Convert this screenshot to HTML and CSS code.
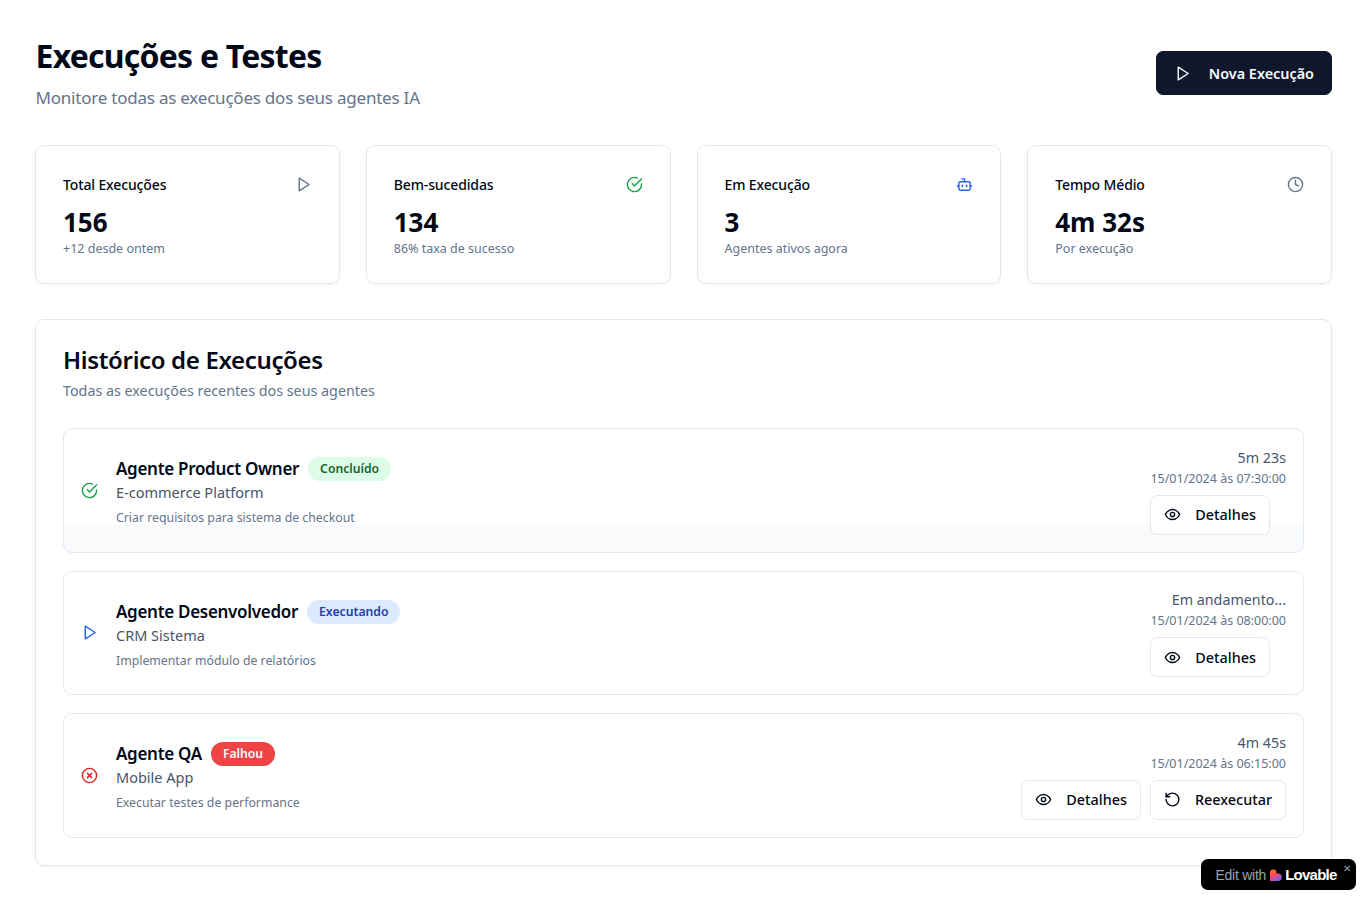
FILE: index.html
```html
<!DOCTYPE html>
<html lang="pt-BR">

<head>
    <meta charset="UTF-8">
    <title>Execuções e Testes</title>
    <link rel="stylesheet" href="styles.css">
</head>

<body>
    <main class="page">
        <header class="page-header">
            <div>
                <h1>Execuções e Testes</h1>
                <p class="page-sub">Monitore todas as execuções dos seus agentes IA</p>
            </div>
            <button class="btn btn-primary">
                <svg class="icon" viewBox="0 0 24 24"><polygon points="6 3 20 12 6 21 6 3"/></svg>
                Nova Execução
            </button>
        </header>

        <section class="stats">
            <div class="stat-card">
                <div class="stat-top">
                    <span class="stat-label">Total Execuções</span>
                    <svg class="icon slate" viewBox="0 0 24 24"><polygon points="6 3 20 12 6 21 6 3"/></svg>
                </div>
                <div class="stat-value">156</div>
                <div class="stat-note">+12 desde ontem</div>
            </div>
            <div class="stat-card">
                <div class="stat-top">
                    <span class="stat-label">Bem-sucedidas</span>
                    <svg class="icon green" viewBox="0 0 24 24"><path d="M22 11.08V12a10 10 0 1 1-5.93-9.14"/><path d="m9 11 3 3L22 4"/></svg>
                </div>
                <div class="stat-value">134</div>
                <div class="stat-note">86% taxa de sucesso</div>
            </div>
            <div class="stat-card">
                <div class="stat-top">
                    <span class="stat-label">Em Execução</span>
                    <svg class="icon blue" viewBox="0 0 24 24"><path d="M12 8V4H8"/><rect x="4" y="8" width="16" height="12" rx="2"/><path d="M2 14h2"/><path d="M20 14h2"/><path d="M15 13v2"/><path d="M9 13v2"/></svg>
                </div>
                <div class="stat-value">3</div>
                <div class="stat-note">Agentes ativos agora</div>
            </div>
            <div class="stat-card">
                <div class="stat-top">
                    <span class="stat-label">Tempo Médio</span>
                    <svg class="icon slate" viewBox="0 0 24 24"><circle cx="12" cy="12" r="10"/><polyline points="12 6 12 12 16 14"/></svg>
                </div>
                <div class="stat-value">4m 32s</div>
                <div class="stat-note">Por execução</div>
            </div>
        </section>

        <section class="history">
            <h2>Histórico de Execuções</h2>
            <p class="history-sub">Todas as execuções recentes dos seus agentes</p>

            <div class="run-list">
                <article class="run run-hover">
                    <svg class="icon green" viewBox="0 0 24 24"><path d="M22 11.08V12a10 10 0 1 1-5.93-9.14"/><path d="m9 11 3 3L22 4"/></svg>
                    <div class="run-info">
                        <div class="run-title">
                            <h3>Agente Product Owner</h3>
                            <span class="badge badge-done">Concluído</span>
                        </div>
                        <p class="run-project">E-commerce Platform</p>
                        <p class="run-task">Criar requisitos para sistema de checkout</p>
                    </div>
                    <div class="run-side">
                        <div class="run-time">5m 23s</div>
                        <div class="run-date">15/01/2024 às 07:30:00</div>
                        <div class="run-actions">
                            <button class="btn btn-outline btn-inset">
                                <svg class="icon" viewBox="0 0 24 24"><path d="M2 12s3-7 10-7 10 7 10 7-3 7-10 7-10-7-10-7Z"/><circle cx="12" cy="12" r="3"/></svg>
                                Detalhes
                            </button>
                        </div>
                    </div>
                </article>

                <article class="run">
                    <svg class="icon blue" viewBox="0 0 24 24"><polygon points="6 3 20 12 6 21 6 3"/></svg>
                    <div class="run-info">
                        <div class="run-title">
                            <h3>Agente Desenvolvedor</h3>
                            <span class="badge badge-running">Executando</span>
                        </div>
                        <p class="run-project">CRM Sistema</p>
                        <p class="run-task">Implementar módulo de relatórios</p>
                    </div>
                    <div class="run-side">
                        <div class="run-time">Em andamento...</div>
                        <div class="run-date">15/01/2024 às 08:00:00</div>
                        <div class="run-actions">
                            <button class="btn btn-outline btn-inset">
                                <svg class="icon" viewBox="0 0 24 24"><path d="M2 12s3-7 10-7 10 7 10 7-3 7-10 7-10-7-10-7Z"/><circle cx="12" cy="12" r="3"/></svg>
                                Detalhes
                            </button>
                        </div>
                    </div>
                </article>

                <article class="run">
                    <svg class="icon red" viewBox="0 0 24 24"><circle cx="12" cy="12" r="10"/><path d="m15 9-6 6"/><path d="m9 9 6 6"/></svg>
                    <div class="run-info">
                        <div class="run-title">
                            <h3>Agente QA</h3>
                            <span class="badge badge-failed">Falhou</span>
                        </div>
                        <p class="run-project">Mobile App</p>
                        <p class="run-task">Executar testes de performance</p>
                    </div>
                    <div class="run-side">
                        <div class="run-time">4m 45s</div>
                        <div class="run-date">15/01/2024 às 06:15:00</div>
                        <div class="run-actions">
                            <button class="btn btn-outline">
                                <svg class="icon" viewBox="0 0 24 24"><path d="M2 12s3-7 10-7 10 7 10 7-3 7-10 7-10-7-10-7Z"/><circle cx="12" cy="12" r="3"/></svg>
                                Detalhes
                            </button>
                            <button class="btn btn-outline">
                                <svg class="icon" viewBox="0 0 24 24"><path d="M3 12a9 9 0 1 0 9-9 9.75 9.75 0 0 0-6.74 2.74L3 8"/><path d="M3 3v5h5"/></svg>
                                Reexecutar
                            </button>
                        </div>
                    </div>
                </article>
            </div>
        </section>
    </main>

    <!-- Lovable badge -->
    <div class="lovable">
        <span class="lovable-edit">Edit with</span>
        <svg class="lovable-logo" viewBox="0 0 12 12">
            <defs>
                <linearGradient id="heart" x1="0" y1="0" x2="0.6" y2="1">
                    <stop offset="0" stop-color="#fe7b02"/>
                    <stop offset="0.5" stop-color="#fe4a5c"/>
                    <stop offset="1" stop-color="#7c5cf0"/>
                </linearGradient>
            </defs>
            <path fill="url(#heart)" d="M3 0.5a3 3 0 0 1 3 3v0.6h1.4a3.3 3.3 0 0 1 0 6.9H0v-7.5a3 3 0 0 1 3-3Z"/>
        </svg>
        <span class="lovable-name">Lovable</span>
        <span class="lovable-close">✕</span>
    </div>
</body>

</html>
```

FILE: styles.css
```css
* {
    box-sizing: border-box;
}

body {
    margin: 0;
    background: #fff;
    color: #020817;
    font-family: "Noto Sans", "Open Sans", sans-serif;
}

h1, h2, h3, p {
    margin: 0;
}

.page {
    padding: 36px 35px 34px 35px;
}

.page-header {
    display: flex;
    justify-content: space-between;
    align-items: center;
    margin-bottom: 34px;
}

h1 {
    padding-left: 0.5px;
    font-size: 32px;
    line-height: 40px;
    font-weight: 700;
    letter-spacing: -0.78px;
}

.page-sub {
    margin-top: 9px;
    padding-left: 0.5px;
    font-size: 17px;
    line-height: 26px;
    letter-spacing: -0.22px;
    color: #64748b;
}

.icon {
    width: 17px;
    height: 17px;
    flex: none;
    fill: none;
    stroke: currentColor;
    stroke-width: 2;
    stroke-linecap: round;
    stroke-linejoin: round;
}

.slate { color: #64748b; }
.green { color: #16a34a; }
.blue { color: #2563eb; }
.red { color: #dc2626; }

.btn {
    display: inline-flex;
    align-items: center;
    gap: 14px;
    height: 40px;
    padding: 0 13px;
    border-radius: 7px;
    border: 1px solid #e2e8f0;
    background: #fff;
    color: #020817;
    font-family: inherit;
    font-size: 14.4px;
    font-weight: 500;
}

.btn-primary {
    gap: 18px;
    height: 44px;
    margin-bottom: 1px;
    padding: 0 17px;
    background: #0f172a;
    border-color: #0f172a;
    color: #f8fafc;
    font-size: 14.4px;
    font-weight: 600;
}

.btn-inset {
    margin-right: 16px;
}

.stats {
    display: grid;
    grid-template-columns: repeat(4, 1fr);
    gap: 26px;
    margin-bottom: 35.5px;
}

.stat-card {
    height: 138.5px;
    padding: 27px;
    border: 1px solid #e2e8f0;
    border-radius: 9px;
    box-shadow: 0 1px 2px rgba(0, 0, 0, 0.05);
}

.stat-top {
    display: flex;
    justify-content: space-between;
    align-items: center;
    height: 22px;
}

.stat-label {
    font-size: 14px;
    font-weight: 500;
    letter-spacing: -0.13px;
}

.stat-value {
    margin-top: 9px;
    font-size: 26px;
    line-height: 36px;
    font-weight: 700;
}

.stat-note {
    margin-top: 1px;
    font-size: 12.5px;
    line-height: 16px;
    color: #64748b;
}

.history {
    padding: 27px;
    border: 1px solid #e2e8f0;
    border-radius: 9px;
    box-shadow: 0 1px 2px rgba(0, 0, 0, 0.05);
}

h2 {
    font-size: 24px;
    line-height: 26px;
    font-weight: 600;
    letter-spacing: -0.35px;
}

.history-sub {
    margin-top: 8px;
    font-size: 14.3px;
    line-height: 20px;
    color: #64748b;
}

.run-list {
    display: flex;
    flex-direction: column;
    gap: 18px;
    margin-top: 27px;
}

.run {
    display: flex;
    align-items: center;
    gap: 18px;
    height: 124.5px;
    padding: 0 17px;
    border: 1px solid #e2e8f0;
    border-radius: 9px;
}

.run-hover {
    background: linear-gradient(#fff 96px, #f8fafc 96px);
}

.run-info {
    flex: 1;
    padding-top: 5px;
}

.run-title {
    display: flex;
    align-items: center;
    gap: 9px;
    height: 21.5px;
}

h3 {
    font-size: 17px;
    line-height: 24px;
    font-weight: 600;
    letter-spacing: -0.3px;
}

.badge {
    height: 24px;
    padding: 0 12px;
    border-radius: 12px;
    font-size: 12.2px;
    line-height: 24px;
    font-weight: 600;
}

.badge-done { background: #dcfce7; color: #166534; }
.badge-running { background: #dbeafe; color: #1e40af; }
.badge-failed { background: #ef4444; color: #f8fafc; }

.run-project {
    font-size: 14.5px;
    line-height: 24px;
    color: #475569;
}

.run-task {
    margin-top: 5px;
    font-size: 12.3px;
    line-height: 18px;
    color: #64748b;
}

.run-side {
    text-align: right;
}

.run-time {
    padding-top: 1px;
    font-size: 14.3px;
    line-height: 22px;
    color: #475569;
}

.run-date {
    font-size: 12.5px;
    line-height: 20px;
    color: #64748b;
}

.run-actions {
    display: flex;
    justify-content: flex-end;
    gap: 9px;
    margin-top: 6px;
}

.lovable {
    position: fixed;
    right: 11px;
    top: 859px;
    display: flex;
    align-items: center;
    width: 155px;
    height: 31px;
    padding-left: 14.5px;
    border-radius: 7px;
    background: #000;
    font-family: "Liberation Sans", sans-serif;
}

.lovable-edit {
    font-size: 14px;
    letter-spacing: -0.25px;
    color: #9ca3af;
}

.lovable-logo {
    width: 13px;
    height: 13px;
    margin: 1px 2px 0 4px;
}

.lovable-name {
    font-size: 15px;
    font-weight: 700;
    letter-spacing: -0.75px;
    color: #fff;
}

.lovable-close {
    position: absolute;
    top: 3px;
    right: 5px;
    font-size: 10px;
    line-height: 14px;
    color: #9ca3af;
}
```
